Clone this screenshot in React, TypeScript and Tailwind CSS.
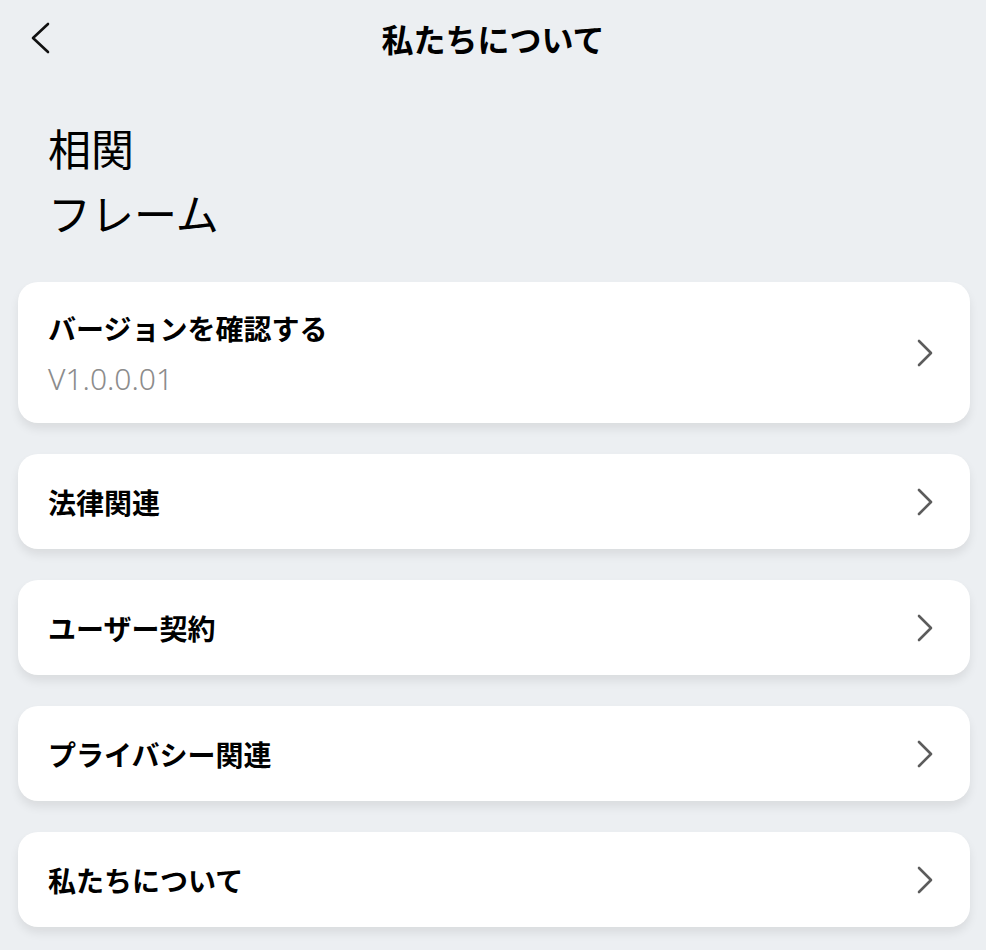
const items = ["法律関連", "ユーザー契約", "プライバシー関連", "私たちについて"];

function ChevronRight() {
  return (
    <svg width="18" height="28" viewBox="0 0 18 28" fill="none" className="shrink-0">
      <path d="M3 2 L15 14 L3 26" stroke="#5c5c5c" strokeWidth="2.6" strokeLinecap="round" strokeLinejoin="round" />
    </svg>
  );
}

export default function App() {
  return (
    <div
      className="min-h-[950px] w-[986px] bg-[#eceff2] text-black"
      style={{ fontFamily: '"Noto Sans CJK JP", "Noto Sans", sans-serif' }}
    >
      <header className="relative flex h-[76px] items-center justify-center">
        <button type="button" aria-label="戻る" className="absolute left-[28px] top-[21px]">
          <svg width="24" height="34" viewBox="0 0 24 34" fill="none">
            <path d="M20 3 L5 17 L20 31" stroke="#111" strokeWidth="2.6" strokeLinecap="round" strokeLinejoin="round" />
          </svg>
        </button>
        <h1 className="text-[32px] font-bold leading-none">私たちについて</h1>
      </header>

      <div className="mt-[39px] px-[48px] text-[43px] leading-[65px] font-normal">
        <p>相関</p>
        <p>フレーム</p>
      </div>

      <div className="mt-[37px] flex flex-col gap-[31px] pl-[18px] pr-[16px]">
        <div className="flex h-[141px] items-center justify-between rounded-[20px] bg-white pl-[30px] pr-[36px] shadow-[0_6px_10px_rgba(0,0,0,0.08)]">
          <div className="flex flex-col pt-[2px]">
            <span className="text-[28px] font-bold leading-[36px]">バージョンを確認する</span>
            <span
              className="mt-[15px] text-[30px] font-light leading-[36px] text-[#8c8c8c]"
              style={{ fontFamily: '"Noto Sans", sans-serif' }}
            >
              V1.0.0.01
            </span>
          </div>
          <ChevronRight />
        </div>

        {items.map((label) => (
          <div
            key={label}
            className="flex h-[95px] items-center justify-between rounded-[20px] bg-white pl-[30px] pr-[36px] shadow-[0_6px_10px_rgba(0,0,0,0.08)]"
          >
            <span className="text-[28px] font-bold leading-[36px]">{label}</span>
            <ChevronRight />
          </div>
        ))}
      </div>
    </div>
  );
}
